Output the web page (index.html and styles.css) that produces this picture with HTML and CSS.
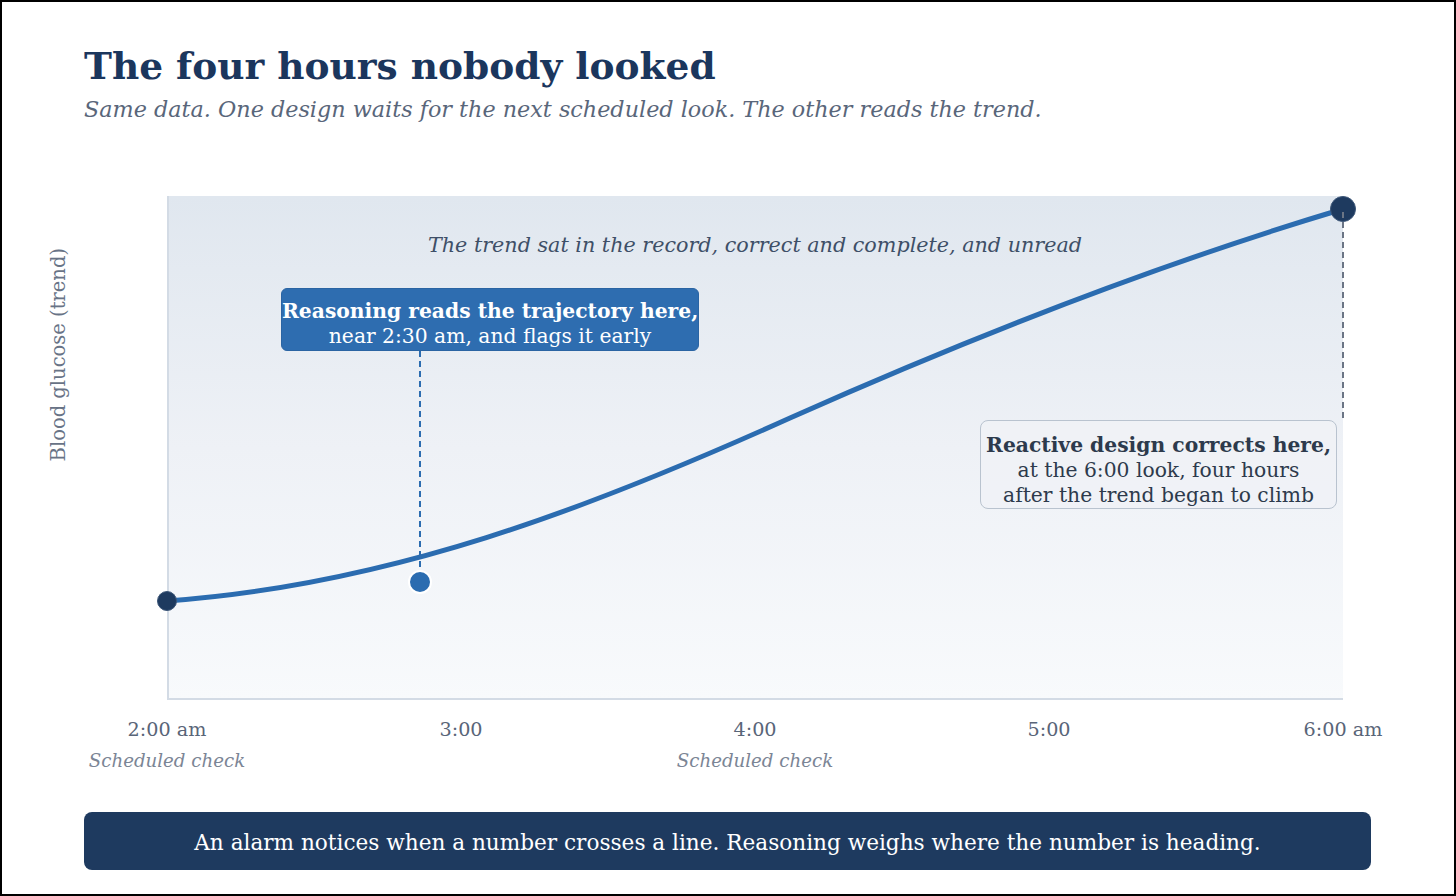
FILE: index.html
```html
<!DOCTYPE html>
<html lang="en">
<head>
<meta charset="utf-8">
<title>The four hours nobody looked</title>
<link rel="stylesheet" href="styles.css">
</head>
<body>
<div class="page">
  <header class="head">
    <h1 class="title">The four hours nobody looked</h1>
    <p class="subtitle">Same data. One design waits for the next scheduled look. The other reads the trend.</p>
  </header>

  <section class="chart">
    <div class="ylabel-col"><span class="ylabel">Blood glucose (trend)</span></div>
    <div class="plot">
      <p class="trend-note">The trend sat in the record, correct and complete, and unread</p>
      <svg class="plot-svg" width="1176" height="504" viewBox="167 196 1176 504" aria-hidden="true">
        <line x1="168" y1="196" x2="168" y2="700" stroke="#d3dbe5" stroke-width="2"/>
        <line x1="167" y1="699" x2="1343" y2="699" stroke="#d3dbe5" stroke-width="2"/>
        <line x1="420" y1="351" x2="420" y2="572" stroke="#2b6cb0" stroke-width="2" stroke-dasharray="6 4"/>
        <path d="M167 601 C390 585 588 509 790 418 C974 336 1159 264 1343 209" fill="none" stroke="#2b6cb0" stroke-width="5" stroke-linecap="round"/>
        <circle cx="420" cy="582" r="11" fill="#2b6cb0" stroke="#ffffff" stroke-width="2"/>
        <circle cx="167" cy="601" r="9.5" fill="#1e3a5f" stroke="#3c5678" stroke-width="1"/>
        <circle cx="1343" cy="209" r="12.5" fill="#1e3a5f" stroke="#3c5678" stroke-width="1"/>
        <line x1="1343" y1="212" x2="1343" y2="418" stroke="#6b7585" stroke-width="2" stroke-dasharray="6 4"/>
      </svg>
      <div class="callout callout-early">
        <strong>Reasoning reads the trajectory here,</strong><br>near 2:30 am, and flags it early
      </div>
      <div class="callout callout-late">
        <strong>Reactive design corrects here,</strong><br>at the 6:00 look, four hours<br>after the trend began to climb
      </div>
    </div>
  </section>

  <div class="axis">
    <div class="tick"><span class="tick-time">2:00 am</span><span class="tick-note">Scheduled check</span></div>
    <div class="tick"><span class="tick-time">3:00</span></div>
    <div class="tick"><span class="tick-time">4:00</span><span class="tick-note">Scheduled check</span></div>
    <div class="tick"><span class="tick-time">5:00</span></div>
    <div class="tick"><span class="tick-time">6:00 am</span></div>
  </div>

  <div class="banner">An alarm notices when a number crosses a line. Reasoning weighs where the number is heading.</div>
</div>
</body>
</html>
```

FILE: styles.css
```css
* { box-sizing: border-box; }

html, body {
  margin: 0;
  padding: 0;
  background: #ffffff;
}

body {
  font-family: "DejaVu Serif", "Liberation Serif", serif;
}

.page {
  width: 1456px;
  height: 896px;
  border: 2px solid #000000;
  background: #ffffff;
  padding-top: 42px;
  overflow: hidden;
}

.head {
  padding-left: 82px;
}

.title {
  margin: 0;
  font-size: 37.5px;
  line-height: 44px;
  font-weight: bold;
  color: #1b365d;
}

.subtitle {
  margin: 7px 0 0;
  font-size: 22.3px;
  line-height: 28px;
  font-style: italic;
  color: #59667a;
}

.chart {
  display: flex;
  margin-top: 73px;
  height: 504px;
}

.ylabel-col {
  width: 165px;
  flex: none;
  padding-left: 46px;
  padding-top: 52px;
}

.ylabel {
  display: block;
  writing-mode: vertical-rl;
  transform: rotate(180deg);
  font-size: 19.5px;
  line-height: 22px;
  color: #687386;
  white-space: nowrap;
}

.plot {
  position: relative;
  width: 1176px;
  height: 504px;
  flex: none;
  background: linear-gradient(to bottom, #e0e7ef 0%, #eef1f6 50%, #f8fafc 100%);
  padding-top: 37px;
}

.plot-svg {
  position: absolute;
  left: 0;
  top: 0;
  overflow: visible;
}

.trend-note {
  position: relative;
  z-index: 1;
  margin: 0;
  text-align: center;
  font-size: 20.7px;
  line-height: 24px;
  font-style: italic;
  color: #3e4f67;
}

.callout {
  position: absolute;
  text-align: center;
  white-space: nowrap;
  font-size: 20.3px;
  line-height: 25px;
}

.callout strong { font-weight: bold; }

.callout-early {
  left: 114px;
  top: 92px;
  width: 418px;
  height: 63px;
  padding-top: 10px;
  background: #2e6db0;
  border: 1px solid #2a64a3;
  border-radius: 6px;
  color: #ffffff;
}

.callout-late {
  left: 813px;
  top: 224px;
  width: 357px;
  height: 89px;
  padding-top: 12px;
  background: rgba(239, 242, 246, 0.9);
  border: 1.5px solid #b9c3cf;
  border-radius: 8px;
  color: #2d3a4c;
}

.axis {
  display: flex;
  margin-top: 18px;
  margin-left: 18px;
}

.tick {
  width: 294px;
  flex: none;
  display: flex;
  flex-direction: column;
  align-items: center;
}

.tick-time {
  font-size: 19.2px;
  line-height: 24px;
  color: #596578;
}

.tick-note {
  margin-top: 8px;
  font-size: 18.2px;
  line-height: 22px;
  font-style: italic;
  color: #7b8595;
}

.banner {
  margin: 40px 83px 0 82px;
  height: 58px;
  background: #1e3a5f;
  border-radius: 8px;
  color: #ffffff;
  font-size: 21.6px;
  line-height: 62px;
  text-align: center;
  overflow: hidden;
}
```
